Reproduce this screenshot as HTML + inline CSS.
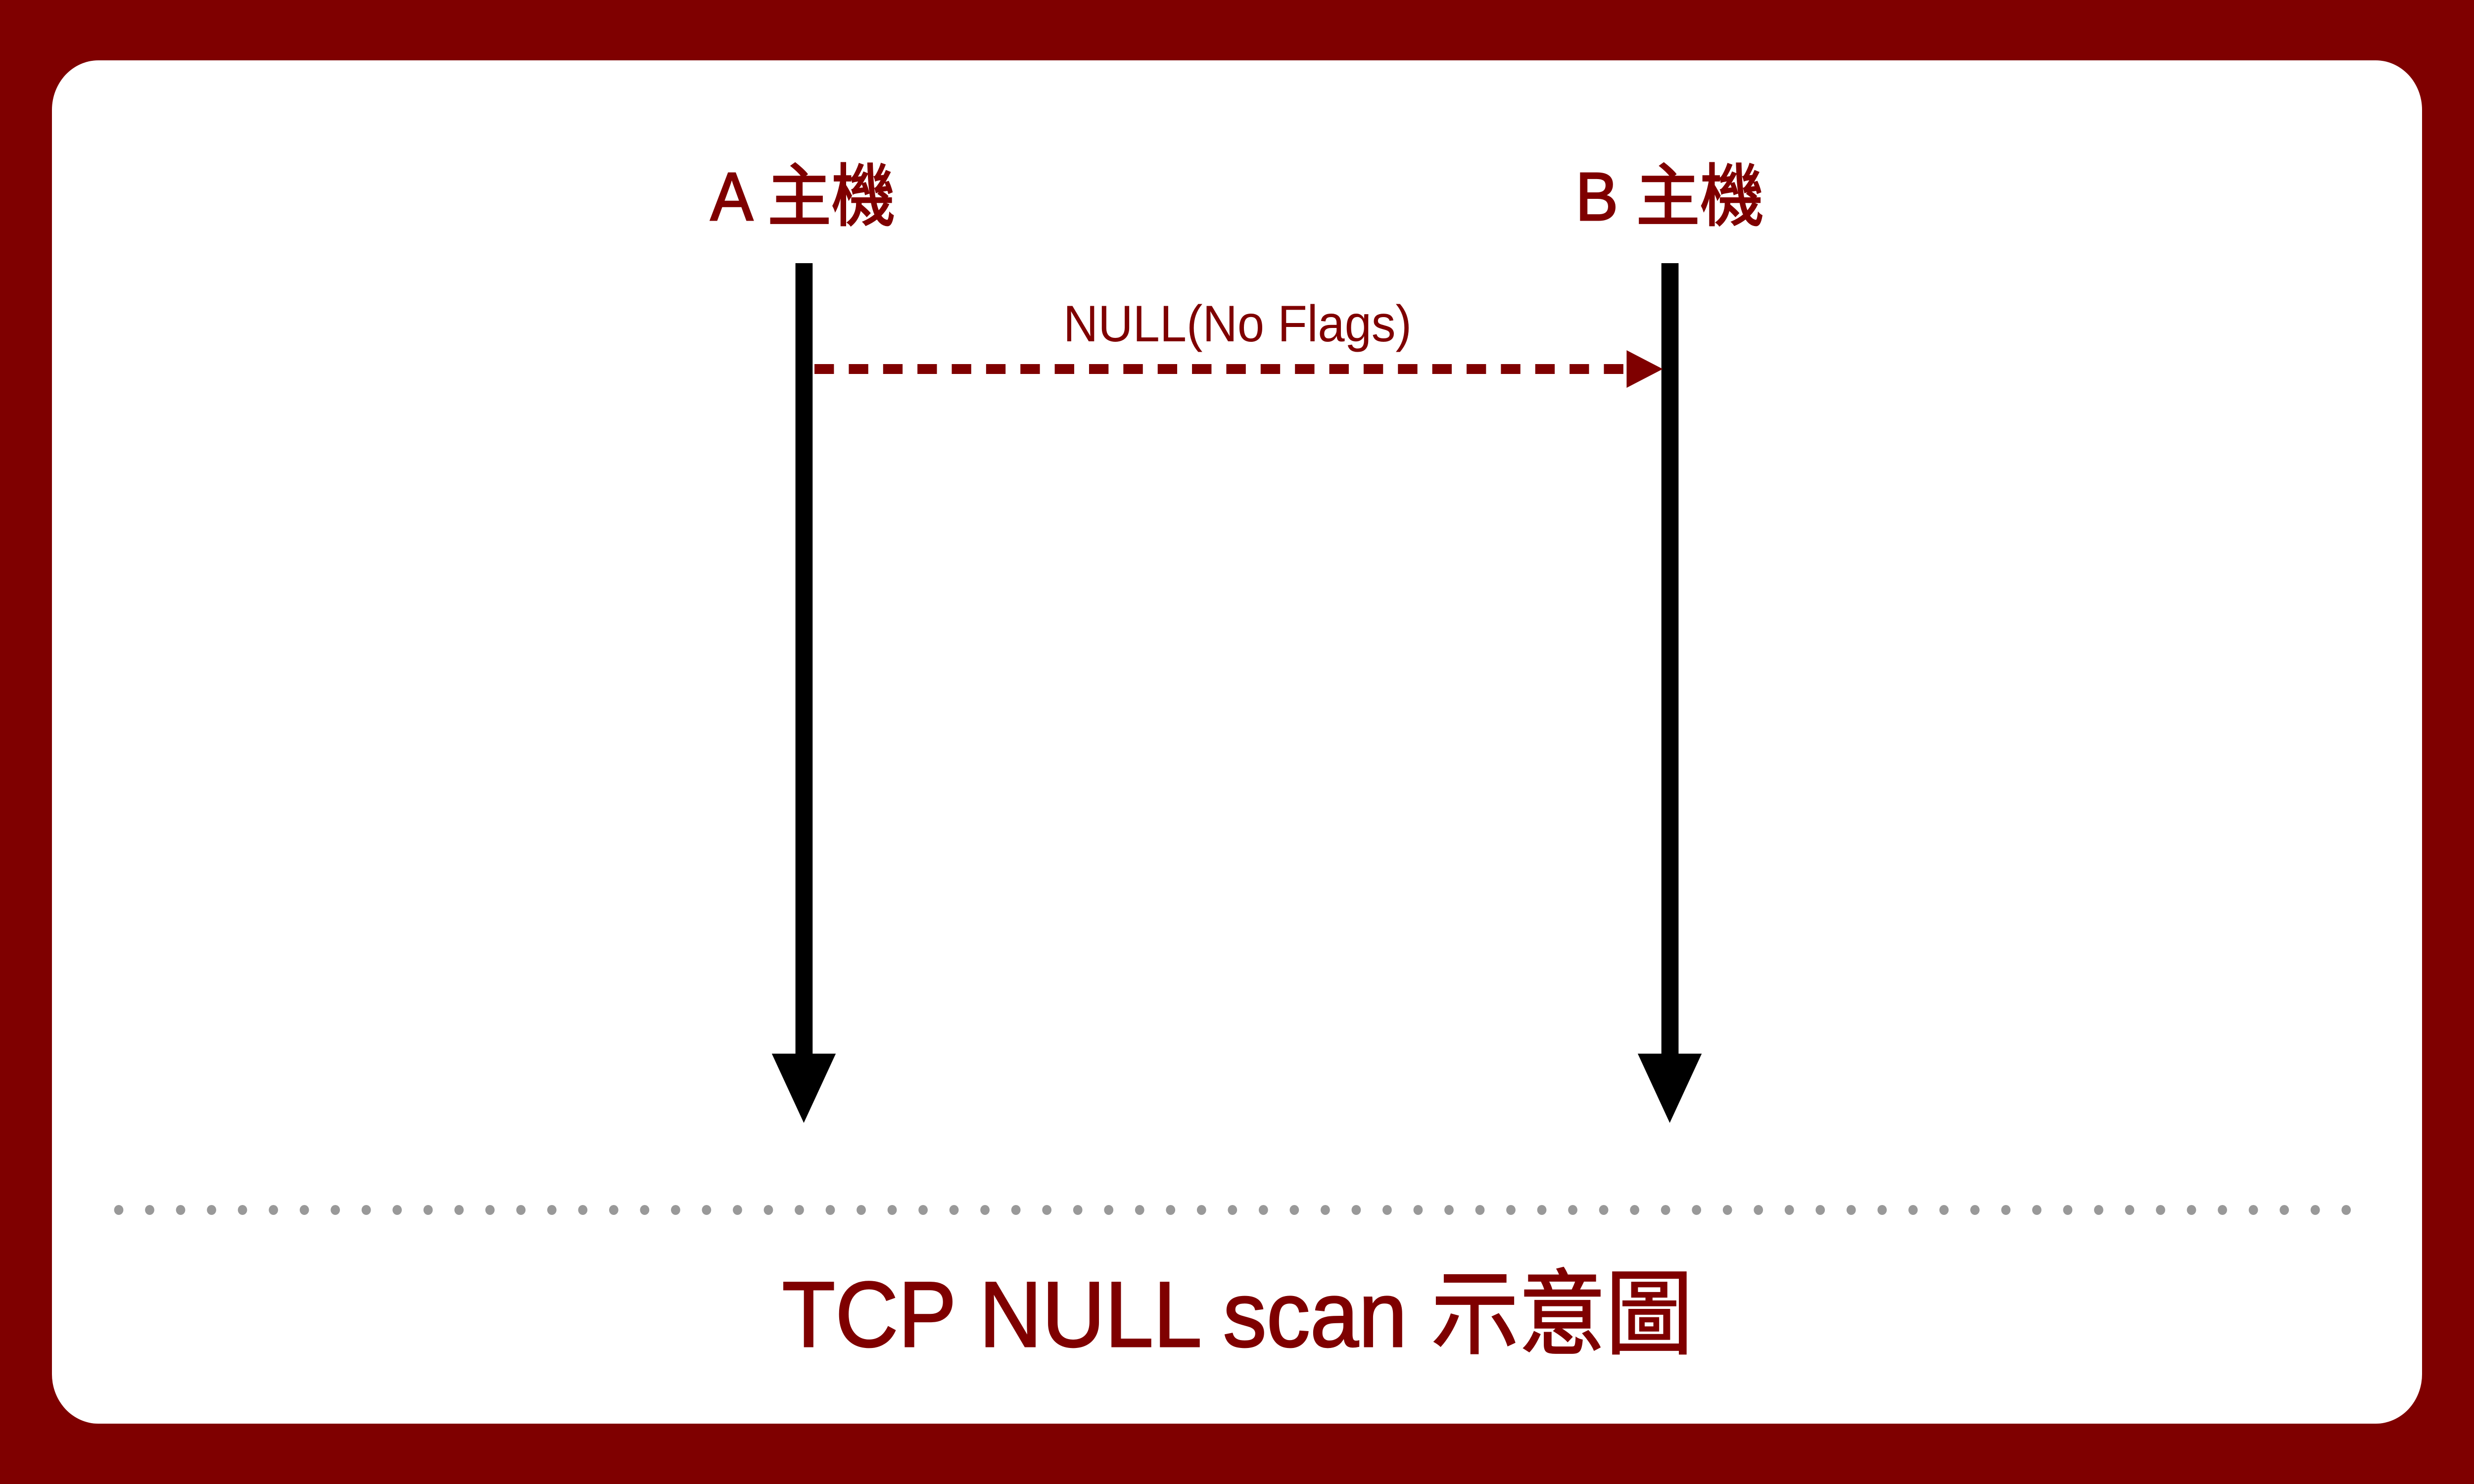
<!DOCTYPE html>
<html><head><meta charset="utf-8"><style>
html,body{margin:0;padding:0;background:#7f0000;}
body{width:100vw;height:100vh;overflow:hidden;}
svg{display:block;width:100vw;height:100vh;}
text{font-family:"Liberation Sans","Noto Sans CJK TC",sans-serif;fill:#7f0000;}
</style></head><body>
<svg viewBox="0 0 5334 3000" preserveAspectRatio="none">
<rect x="0" y="0" width="5334" height="3000" fill="#7f0000"/>
<rect x="112" y="122" width="5110" height="2756" rx="100" ry="100" fill="#fff"/>
<text x="1731" y="445" font-size="138" text-anchor="middle" stroke="#7f0000" stroke-width="3">A 主機</text>
<text x="3600" y="445" font-size="138" text-anchor="middle" stroke="#7f0000" stroke-width="3">B 主機</text>
<rect x="1715" y="532" width="37" height="1620" fill="#000"/>
<polygon points="1664,2130 1802,2130 1733,2270" fill="#000"/>
<rect x="3582" y="532" width="37" height="1620" fill="#000"/>
<polygon points="3531,2130 3669,2130 3600,2270" fill="#000"/>
<text x="2668" y="690" font-size="104" text-anchor="middle">NULL(No Flags)</text>
<line x1="1756" y1="746" x2="3510" y2="746" stroke="#7f0000" stroke-width="20" stroke-dasharray="42 32"/>
<polygon points="3507,708 3585,746 3507,784" fill="#7f0000"/>
<line x1="256" y1="2446" x2="5070" y2="2446" stroke="#999" stroke-width="20" stroke-linecap="round" stroke-dasharray="0 66.7"/>
<text x="2668" y="2722" font-size="188" text-anchor="middle" stroke="#7f0000" stroke-width="3">TCP NULL scan 示意圖</text>
</svg>
</body></html>
